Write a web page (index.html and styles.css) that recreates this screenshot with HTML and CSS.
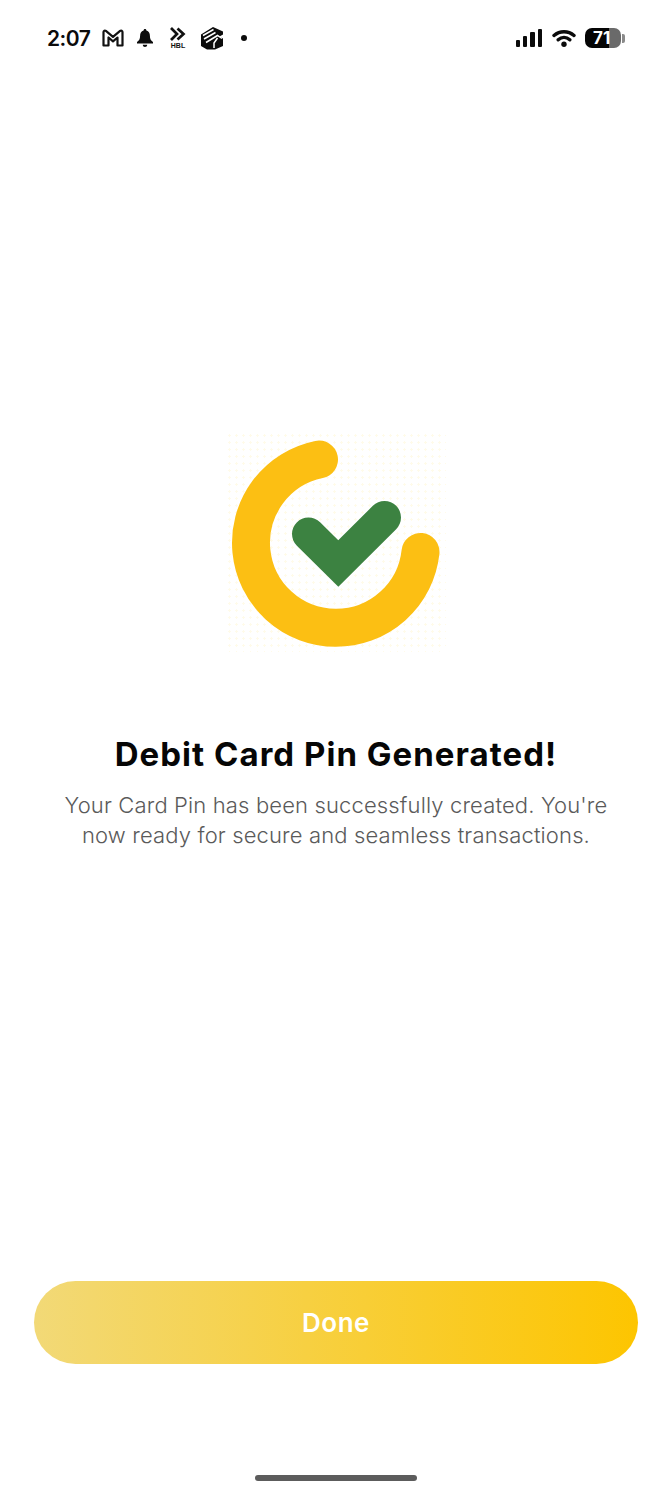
FILE: index.html
```html
<!DOCTYPE html>
<html lang="en">
<head>
<meta charset="utf-8">
<title>Debit Card Pin Generated</title>
<link rel="stylesheet" href="styles.css">
</head>
<body>
<div class="screen">
  <header class="status">
    <div class="status-left">
      <span class="time">2:07</span>
      <svg class="ic-gmail" viewBox="0 0 22 18"><path d="M1.500 16.500V3c0-1.300 1.400-1.900 2.400-1.100L11 7.800l7.100-5.900c1-.8 2.400-.2 2.400 1.100v13.500h-5V8.500L11 12.300 6.500 8.500v8z" fill="none" stroke="#111" stroke-width="2.200" stroke-linejoin="round"/></svg>
      <svg class="ic-bell" viewBox="0 0 16 18"><path d="M8 0c.9 0 1.400.7 1.400 1.500 2.500.7 3.500 2.700 3.500 5.300 0 3.200.8 4.800 3.100 6.200v1.500H0V13c2.300-1.400 3.100-3 3.100-6.200 0-2.600 1-4.600 3.500-5.300C6.600.7 7.100 0 8 0zM5.800 15.700h4.400C10.200 17 9.200 18 8 18s-2.200-1-2.200-2.300z" fill="#0c0c0c"/></svg>
      <svg class="ic-hbl" viewBox="0 0 18 22"><path d="M2 1 8 7l-6 6M8.500 1.500 14.500 7l-6 5.500" fill="none" stroke="#111" stroke-width="2.700"/><text x="9" y="20.500" class="hbl-text" text-anchor="middle">HBL</text></svg>
      <svg class="ic-box" viewBox="0 0 24 24"><path d="M1 8.500 13 1l10 4.500v3L19.500 10.500 23 12.500V20l-8 3.500H7L1 20z" fill="#0b0b0b"/><path d="M3 9.500 13.500 3.500M4 13 15.500 6.500M6 16.500 17.500 9.500 22 12.500M14 22l0-5 3.500-5" fill="none" stroke="#fff" stroke-width="1.500"/></svg>
      <span class="dot"></span>
    </div>
    <div class="status-right">
      <div class="signal"><i class="b1"></i><i class="b2"></i><i class="b3"></i><i class="b4"></i></div>
      <svg class="ic-wifi" viewBox="0 0 24 18"><path d="M2 6.500C7.800 1.500 16.200 1.500 22 6.500M6.200 10.800c3.500-3 8.100-3 11.600 0" fill="none" stroke="#0b0b0b" stroke-width="3.400" stroke-linecap="round"/><circle cx="12" cy="15.200" r="2.700" fill="#0b0b0b"/></svg>
      <div class="battery"><div class="batt-body"><span class="batt-num">71</span></div><span class="batt-tip"></span></div>
    </div>
  </header>

  <main class="content">
    <div class="illustration">
      <svg class="logo" viewBox="226 432 220 220">
        <path d="M319 459.500A85 85 0 1 0 420.500 552" fill="none" stroke="#fcbf13" stroke-width="38" stroke-linecap="round"/>
        <path d="M308.500 534 338.300 563.500 384.500 517.500" fill="none" stroke="#3c8241" stroke-width="33" stroke-linecap="round" stroke-linejoin="miter"/>
      </svg>
    </div>
    <h1 class="title">Debit Card Pin Generated!</h1>
    <p class="subtitle">Your Card Pin has been successfully created. You're<br>now ready for secure and seamless transactions.</p>
  </main>

  <div class="actions">
    <button class="done" type="button">Done</button>
  </div>
  <div class="home-wrap"><span class="home"></span></div>
</div>
</body>
</html>
```

FILE: styles.css
```css
* { box-sizing: border-box; }
html, body { margin: 0; padding: 0; background: #fff; }
body { font-family: Inter, "Liberation Sans", sans-serif; }

.screen {
  width: 672px;
  height: 1496px;
  display: flex;
  flex-direction: column;
  background: #fff;
  overflow: hidden;
}

.status {
  height: 76px;
  flex: none;
  display: flex;
  justify-content: space-between;
  align-items: center;
  padding: 0 47px 0 47px;
}
.status-left, .status-right { display: flex; align-items: center; }
.time { font-size: 21px; font-weight: 600; color: #0b0b0b; width: 55px; letter-spacing: -0.500px; }
.ic-gmail { width: 22px; height: 18px; margin-right: 13px; }
.ic-bell { width: 16px; height: 18px; margin-right: 16px; }
.ic-hbl { width: 18px; height: 22px; margin-right: 13px; }
.ic-box { width: 24px; height: 24px; margin-right: 17px; }
.hbl-text { font-family: "Liberation Sans", sans-serif; font-size: 7px; font-weight: 700; fill: #111; }
.dot { width: 6px; height: 6px; border-radius: 50%; background: #0b0b0b; }

.signal { display: flex; align-items: flex-end; gap: 2.800px; height: 18px; margin-right: 10px; }
.signal i { width: 4.500px; background: #0b0b0b; border-radius: 1px; display: block; }
.signal .b1 { height: 7px; }
.signal .b2 { height: 11px; }
.signal .b3 { height: 15px; }
.signal .b4 { height: 18px; }
.ic-wifi { width: 24px; height: 18px; margin-right: 9px; }
.battery { display: flex; align-items: center; gap: 1px; }
.batt-body {
  width: 36px; height: 20px; border-radius: 7px;
  background: linear-gradient(90deg, #050505 0 66%, #6a6a6a 66% 100%);
  display: flex; align-items: center; padding-left: 8px;
}
.batt-num { color: #fff; font-size: 17px; font-weight: 700; line-height: 1; }
.batt-tip { width: 3px; height: 9px; border-radius: 0 2px 2px 0; background: #8a8a8a; }

.content {
  flex: none;
  display: flex;
  flex-direction: column;
  align-items: center;
  padding-top: 356px;
}
.illustration {
  width: 220px;
  height: 220px;
  background-image: radial-gradient(circle, #fffbea 1px, transparent 1.400px);
  background-size: 7px 7px;
}
.logo { display: block; width: 220px; height: 220px; }
.title {
  margin: 82px 0 0;
  font-size: 33px;
  line-height: 40px;
  font-weight: 700;
  color: #060606;
  text-align: center;
  letter-spacing: 1.030px;
}
.subtitle {
  margin: 16px 0 0;
  font-size: 22px;
  line-height: 30px;
  font-weight: 300;
  color: #5a5a5a;
  text-align: center;
  letter-spacing: 0.140px;
}

.actions { flex: none; margin-top: 431px; padding: 0 34px; }
.done {
  display: block;
  width: 100%;
  height: 83px;
  border: 0;
  border-radius: 42px;
  background: linear-gradient(90deg, #f2d977 0%, #fdc500 100%);
  color: #fff;
  font-family: inherit;
  font-size: 26px;
  font-weight: 600;
  letter-spacing: 0.500px;
}
.home-wrap { flex: none; display: flex; justify-content: center; padding-top: 111px; }
.home { width: 162px; height: 6px; border-radius: 3px; background: #5c5c5c; }
```
